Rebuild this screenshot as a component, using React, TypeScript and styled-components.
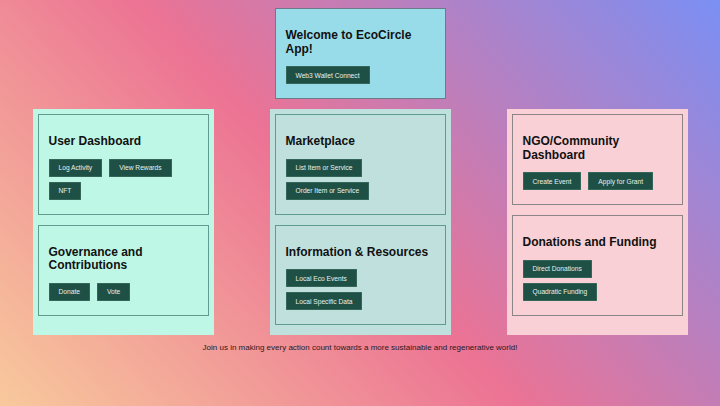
import React from "react";
import styled, { createGlobalStyle } from "styled-components";

const GlobalStyle = createGlobalStyle`
  html, body {
    margin: 0;
    padding: 0;
  }
  body {
    font-family: "Liberation Sans", Arial, sans-serif;
    color: #111;
  }
`;

type Tone = "mint" | "sage" | "rose";

const columnColors: Record<Tone, string> = {
  mint: "#bff7e7",
  sage: "#bfe0dd",
  rose: "#f8d0d5",
};

const cardBorders: Record<Tone, string> = {
  mint: "#5f9c8f",
  sage: "#5f9c8f",
  rose: "#8c8486",
};

interface Section {
  title: string;
  actions: string[];
}

const columns: { tone: Tone; sections: Section[] }[] = [
  {
    tone: "mint",
    sections: [
      { title: "User Dashboard", actions: ["Log Activity", "View Rewards", "NFT"] },
      { title: "Governance and Contributions", actions: ["Donate", "Vote"] },
    ],
  },
  {
    tone: "sage",
    sections: [
      { title: "Marketplace", actions: ["List Item or Service", "Order Item or Service"] },
      { title: "Information & Resources", actions: ["Local Eco Events", "Local Specific Data"] },
    ],
  },
  {
    tone: "rose",
    sections: [
      { title: "NGO/Community Dashboard", actions: ["Create Event", "Apply for Grant"] },
      { title: "Donations and Funding", actions: ["Direct Donations", "Quadratic Funding"] },
    ],
  },
];

const App = () => {
  return (
    <Page>
      <GlobalStyle />
      <Welcome>
        <Heading>Welcome to EcoCircle App!</Heading>
        <Actions>
          <ActionButton>Web3 Wallet Connect</ActionButton>
        </Actions>
      </Welcome>

      <Columns>
        {columns.map((col) => (
          <Column key={col.tone} $tone={col.tone}>
            {col.sections.map((section) => (
              <Card key={section.title} $tone={col.tone}>
                <Heading>{section.title}</Heading>
                <Actions>
                  {section.actions.map((a) => (
                    <ActionButton key={a}>{a}</ActionButton>
                  ))}
                </Actions>
              </Card>
            ))}
          </Column>
        ))}
      </Columns>

      <Tagline>
        Join us in making every action count towards a more sustainable and regenerative world!
      </Tagline>
    </Page>
  );
};

export default App;

const Page = styled.div`
  min-height: 100vh;
  box-sizing: border-box;
  padding-top: 8px;
  display: flex;
  flex-direction: column;
  align-items: center;
  background: linear-gradient(47deg, #f8c99c 0%, #ec7394 47%, #7a8ff4 100%);
`;

const Welcome = styled.div`
  width: 171px;
  box-sizing: border-box;
  padding: 10px;
  border: 1px solid #6d7a88;
  background-color: #99dce9;
  margin-bottom: 10px;
`;

const Heading = styled.h2`
  font-size: 12px;
  font-weight: bold;
  line-height: 13.5px;
  margin: 10px 0;
  color: #111;
`;

const Actions = styled.div`
  display: flex;
  flex-wrap: wrap;
  column-gap: 7px;
  row-gap: 5px;
  padding-bottom: 4px;
`;

const ActionButton = styled.button`
  font-family: "Liberation Sans", Arial, sans-serif;
  font-size: 6.67px;
  height: 18px;
  box-sizing: border-box;
  padding: 0 10px;
  border: none;
  box-shadow: inset 0 0 0 0.5px #4a7a6e;
  background-color: #1f5045;
  color: #e9f1ed;
  cursor: pointer;
  white-space: nowrap;
`;

const Columns = styled.div`
  display: flex;
  justify-content: center;
  align-items: stretch;
  gap: 56px;
`;

const Column = styled.div<{ $tone: Tone }>`
  width: 181px;
  box-sizing: border-box;
  padding: 5px 5px 10px;
  display: flex;
  flex-direction: column;
  gap: 10px;
  background-color: ${({ $tone }) => columnColors[$tone]};
`;

const Card = styled.div<{ $tone: Tone }>`
  padding: 10px;
  border: 1px solid ${({ $tone }) => cardBorders[$tone]};
`;

const Tagline = styled.p`
  font-size: 8px;
  margin: 8px 0;
  color: #2a1a22;
  text-align: center;
`;
